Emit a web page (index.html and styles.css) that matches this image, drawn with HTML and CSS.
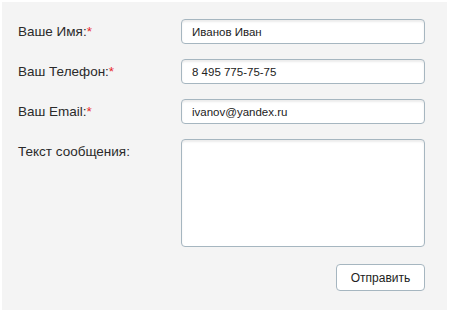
FILE: index.html
```html
<!DOCTYPE html>
<html lang="ru">
<head>
  <meta charset="UTF-8">
  <title>Обратная связь</title>
  <link rel="stylesheet" href="styles.css">
</head>
<body>
  <form class="feedback-form">
    <div class="form-row">
      <label class="form-label" for="name">Ваше Имя:<span class="req">*</span></label>
      <input class="form-input" id="name" type="text" value="Иванов Иван">
    </div>
    <div class="form-row">
      <label class="form-label" for="phone">Ваш Телефон:<span class="req">*</span></label>
      <input class="form-input" id="phone" type="text" value="8 495 775-75-75">
    </div>
    <div class="form-row">
      <label class="form-label" for="email">Ваш Email:<span class="req">*</span></label>
      <input class="form-input" id="email" type="text" value="ivanov@yandex.ru">
    </div>
    <div class="form-row form-row-top">
      <label class="form-label" for="message">Текст сообщения:</label>
      <textarea class="form-input form-textarea" id="message"></textarea>
    </div>
    <div class="form-actions">
      <button class="send-button" type="button">Отправить</button>
    </div>
  </form>
</body>
</html>
```

FILE: styles.css
```css
* {
  margin: 0;
  padding: 0;
  box-sizing: border-box;
}

html, body {
  height: 100%;
}

body {
  font-family: 'Liberation Sans', Arial, sans-serif;
  background: #fff;
  color: #333;
  padding: 2px 3px 5px 2px;
}

.feedback-form {
  height: 100%;
  background: #f4f4f4;
  padding: 17px 22px 0 16px;
}

.form-row {
  display: flex;
  align-items: center;
  margin-bottom: 15px;
}

.form-row-top {
  align-items: flex-start;
  margin-bottom: 17px;
}

.form-label {
  width: 163px;
  flex-shrink: 0;
  font-size: 13.5px;
  color: #2a2a2a;
}

.form-row-top .form-label {
  padding-top: 5px;
}

.req {
  color: #e8272b;
}

.form-input {
  width: 245px;
  height: 25px;
  border: 1px solid #a6b6c0;
  border-radius: 4px;
  background: #fff;
  box-shadow: inset 0 2px 2px rgba(0, 0, 0, 0.08);
  padding: 0 10px;
  font-family: 'Liberation Sans', Arial, sans-serif;
  font-size: 11.5px;
  color: #222;
  outline: none;
}

.form-textarea {
  height: 108px;
  resize: none;
  padding: 6px 10px;
}

.form-actions {
  display: flex;
  justify-content: flex-end;
}

.send-button {
  width: 89px;
  height: 27px;
  border: 1px solid #a6b6c0;
  border-radius: 4px;
  background: #fff;
  font-family: 'Liberation Sans', Arial, sans-serif;
  font-size: 12px;
  color: #222;
  cursor: pointer;
}
```
